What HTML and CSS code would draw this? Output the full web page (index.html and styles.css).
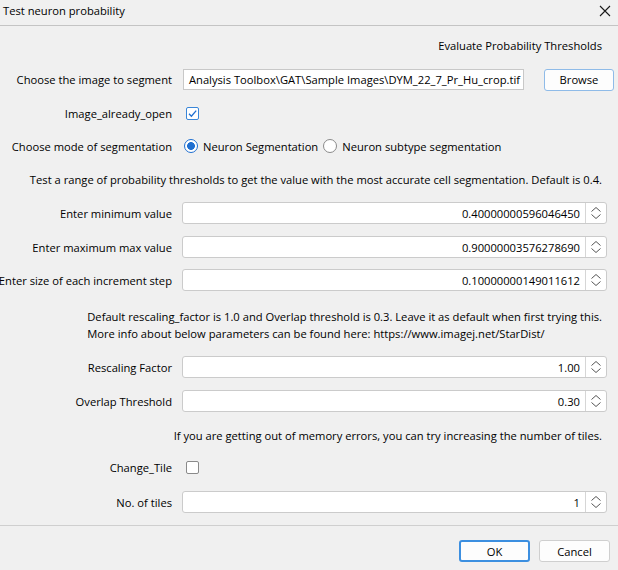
FILE: index.html
```html
<!DOCTYPE html>
<html>
<head>
<meta charset="utf-8">
<link rel="stylesheet" href="styles.css">
</head>
<body>
<div class="window">
  <div class="titlebar">
    <span class="title">Test neuron probability</span>
    <svg class="close" width="12" height="12" viewBox="0 0 12 12"><path d="M1 1L11 11M11 1L1 11" stroke="#1a1a1a" stroke-width="1.1" fill="none"/></svg>
  </div>
  <div class="content">
    <div class="heading">Evaluate Probability Thresholds</div>

    <div class="row r-file">
      <div class="label">Choose the image to segment</div>
      <div class="path"><span>Analysis Toolbox\GAT\Sample Images\DYM_22_7_Pr_Hu_crop.tif</span></div>
      <button class="btn browse">Browse</button>
    </div>

    <div class="row r-open">
      <div class="label">Image_already_open</div>
      <span class="check checked"><svg width="11" height="11" viewBox="0 0 11 11"><path d="M2 5.8L4.4 8.2L9.2 2.6" stroke="#1f6fd1" stroke-width="1.3" fill="none"/></svg></span>
    </div>

    <div class="row r-mode">
      <div class="label">Choose mode of segmentation</div>
      <span class="radio on"></span><span class="opt">Neuron Segmentation</span>
      <span class="radio"></span><span class="opt">Neuron subtype segmentation</span>
    </div>

    <div class="note n-range">Test a range of probability thresholds to get the value with the most accurate cell segmentation. Default is 0.4.</div>

    <div class="row r-min">
      <div class="label">Enter minimum value</div>
      <div class="spin"><span class="val">0.40000000596046450</span><span class="arrows"><svg width="12" height="14" viewBox="0 0 12 14"><path d="M1.5 5.5L6 1.5L10.5 5.5M1.5 8.5L6 12.5L10.5 8.5" stroke="#555" stroke-width="1" fill="none"/></svg></span></div>
    </div>
    <div class="row r-max">
      <div class="label">Enter maximum max value</div>
      <div class="spin"><span class="val">0.90000003576278690</span><span class="arrows"><svg width="12" height="14" viewBox="0 0 12 14"><path d="M1.5 5.5L6 1.5L10.5 5.5M1.5 8.5L6 12.5L10.5 8.5" stroke="#555" stroke-width="1" fill="none"/></svg></span></div>
    </div>
    <div class="row r-step">
      <div class="label">Enter size of each increment step</div>
      <div class="spin"><span class="val">0.10000000149011612</span><span class="arrows"><svg width="12" height="14" viewBox="0 0 12 14"><path d="M1.5 5.5L6 1.5L10.5 5.5M1.5 8.5L6 12.5L10.5 8.5" stroke="#555" stroke-width="1" fill="none"/></svg></span></div>
    </div>

    <div class="para">
      <div class="para-text">Default rescaling_factor is 1.0 and Overlap threshold is 0.3. Leave it as default when first trying this.<br>More info about below parameters can be found here: https://www.imagej.net/StarDist/</div>
    </div>

    <div class="row r-scale">
      <div class="label">Rescaling Factor</div>
      <div class="spin"><span class="val">1.00</span><span class="arrows"><svg width="12" height="14" viewBox="0 0 12 14"><path d="M1.5 5.5L6 1.5L10.5 5.5M1.5 8.5L6 12.5L10.5 8.5" stroke="#555" stroke-width="1" fill="none"/></svg></span></div>
    </div>
    <div class="row r-overlap">
      <div class="label">Overlap Threshold</div>
      <div class="spin"><span class="val">0.30</span><span class="arrows"><svg width="12" height="14" viewBox="0 0 12 14"><path d="M1.5 5.5L6 1.5L10.5 5.5M1.5 8.5L6 12.5L10.5 8.5" stroke="#555" stroke-width="1" fill="none"/></svg></span></div>
    </div>

    <div class="note n-mem">If you are getting out of memory errors, you can try increasing the number of tiles.</div>

    <div class="row r-tile">
      <div class="label">Change_Tile</div>
      <span class="check"></span>
    </div>
    <div class="row r-tiles">
      <div class="label">No. of tiles</div>
      <div class="spin"><span class="val">1</span><span class="arrows"><svg width="12" height="14" viewBox="0 0 12 14"><path d="M1.5 5.5L6 1.5L10.5 5.5M1.5 8.5L6 12.5L10.5 8.5" stroke="#555" stroke-width="1" fill="none"/></svg></span></div>
    </div>
  </div>
  <div class="footer">
    <button class="btn ok">OK</button>
    <button class="btn cancel">Cancel</button>
  </div>
</div>
</body>
</html>
```

FILE: styles.css
```css
html, body {
  margin: 0;
  padding: 0;
  background: #f0f0f0;
}
body {
  font-family: "Open Sans", "Noto Sans", sans-serif;
  font-size: 11.2px;
  color: #000;
  width: 618px;
  height: 570px;
  overflow: hidden;
}
.window {
  display: flex;
  flex-direction: column;
  height: 570px;
}
.titlebar {
  height: 21px;
  padding: 0 7px 4px 3px;
  border-bottom: 1px solid #c4c4c4;
  display: flex;
  align-items: center;
  justify-content: space-between;
  flex: none;
}
.content {
  display: flex;
  flex-direction: column;
  height: 499px;
  flex: none;
}
.heading {
  margin-top: 12px;
  padding-right: 16px;
  text-align: right;
  line-height: 16px;
  white-space: nowrap;
}
.row {
  display: flex;
  align-items: center;
  height: 22px;
  flex: none;
}
.label {
  width: 172px;
  flex: none;
  display: flex;
  justify-content: flex-end;
  white-space: nowrap;
}
.r-file { margin-top: 15px; height: 21px; }
.r-open { margin-top: 12px; }
.r-mode { margin-top: 11px; }
.n-range { margin-top: 15px; }
.r-min { margin-top: 14px; }
.r-max { margin-top: 12px; }
.r-step { margin-top: 11px; }
.r-scale { margin-top: 14px; }
.r-overlap { margin-top: 12px; }
.n-mem { margin-top: 16px; }
.r-tile { margin-top: 12px; }
.r-tiles { margin-top: 13px; }

.path {
  margin-left: 11px;
  width: 341px;
  height: 21px;
  box-sizing: border-box;
  border: 1px solid #c8c8c8;
  background: #fff;
  display: flex;
  justify-content: flex-end;
  align-items: center;
  overflow: hidden;
  white-space: nowrap;
  padding-right: 3px;
}
.btn {
  font-family: inherit;
  font-size: 11.2px;
  background: #fdfdfd;
  border: 1px solid #d0d0d0;
  border-radius: 3px;
  color: #000;
  padding: 0;
  height: 22px;
  width: 71px;
  box-sizing: border-box;
}
.browse {
  margin-left: 20px;
  width: 70px;
  height: 22px;
  border-color: #8fbbe8;
}
.check {
  margin-left: 14px;
  width: 13px;
  height: 13px;
  box-sizing: border-box;
  border: 1px solid #8a8a8a;
  border-radius: 2px;
  background: #fff;
  display: flex;
  align-items: center;
  justify-content: center;
}
.check.checked {
  border-color: #3a86d8;
}
.radio {
  width: 14px;
  height: 14px;
  box-sizing: border-box;
  border: 1px solid #8a8a8a;
  border-radius: 50%;
  background: #fff;
  flex: none;
}
.r-mode .radio:first-of-type { margin-left: 12px; }
.radio.on {
  border: 1px solid #1f6fd1;
  background: radial-gradient(circle, #1f6fd1 0 3.6px, #fff 4.2px);
}
.opt { margin-left: 5px; margin-right: 5px; white-space: nowrap; }

.note {
  line-height: 16px;
  white-space: nowrap;
  padding-right: 16px;
  display: flex;
  justify-content: flex-end;
}
.para {
  margin-top: 17px;
  padding-right: 16px;
  display: flex;
  justify-content: flex-end;
}
.para-text {
  text-align: left;
  line-height: 17px;
  white-space: nowrap;
}

.spin {
  margin-left: 10px;
  width: 425px;
  height: 22px;
  box-sizing: border-box;
  border: 1px solid #cbcbcb;
  border-radius: 3px;
  background: #fff;
  display: flex;
  align-items: stretch;
}
.val {
  flex: 1;
  padding-right: 5px;
  display: flex;
  align-items: center;
  justify-content: flex-end;
}
.arrows {
  width: 20px;
  border-left: 1px solid #d6d6d6;
  display: flex;
  align-items: center;
  justify-content: center;
}

.footer {
  border-top: 1px solid #cfcfcf;
  flex: 1;
  display: flex;
  justify-content: flex-end;
  align-items: flex-start;
  padding: 14px 8px 0 0;
  gap: 9px;
}
.ok {
  border: 2px solid #3c8fe0;
}
.cancel {
  border-color: #cfcfcf;
}
```
